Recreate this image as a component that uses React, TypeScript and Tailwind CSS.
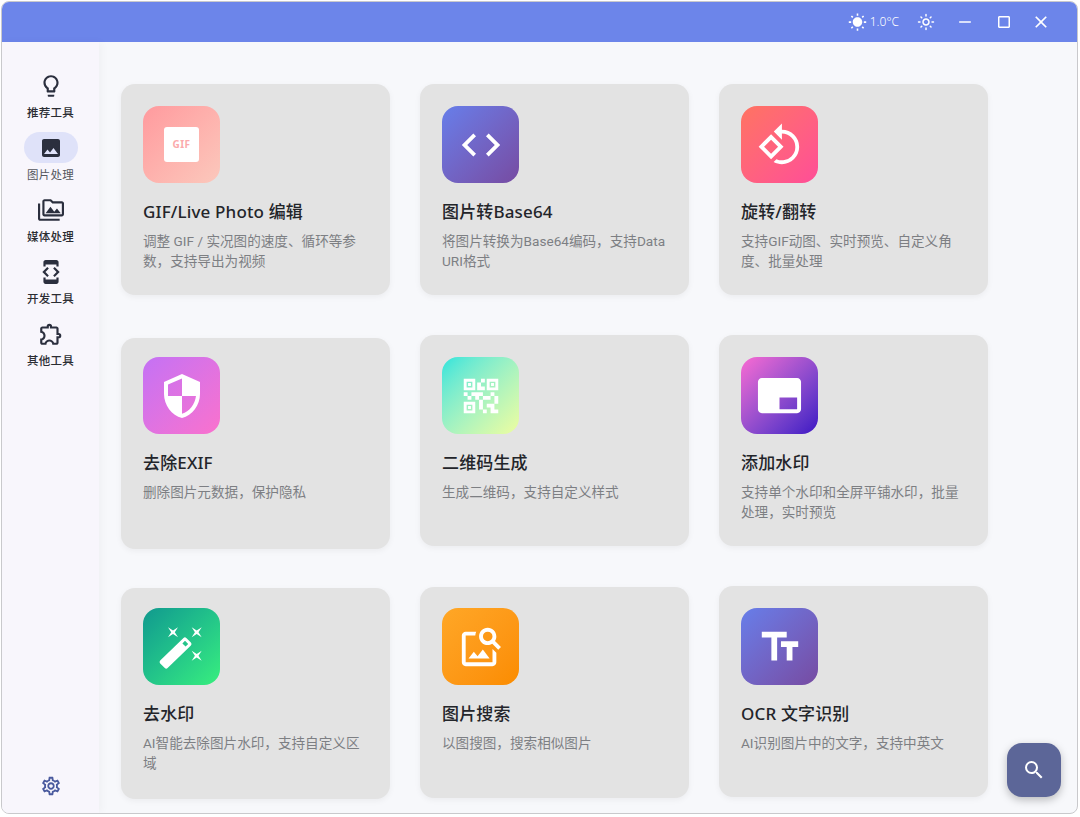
import type { ReactNode } from "react";
import {
  MdBrandingWatermark,
  MdClose,
  MdCode,
  MdCropSquare,
  MdImage,
  MdImageSearch,
  MdOutlineDeveloperMode,
  MdOutlineExtension,
  MdOutlineLightbulb,
  MdOutlineLightMode,
  MdOutlinePermMedia,
  MdOutlineRotate90DegreesCcw,
  MdOutlineSettings,
  MdQrCode2,
  MdRemove,
  MdSearch,
  MdSecurity,
  MdTextFields,
  MdWbSunny,
} from "react-icons/md";

const font = "font-['Noto_Sans','Noto_Sans_CJK_SC',sans-serif]";

type Tool = {
  title: string;
  desc: string;
  bg: string;
  icon: ReactNode;
  mt?: string;
  pt: string;
};

// wand with three little sparkles, drawn on the 77px tile
const WandIcon = () => {
  return (
    <svg viewBox="0 0 77 77" className="w-[77px] h-[77px] text-white" fill="currentColor">
      <path d="M25 19.3l5 3.2 5-3.2-3.2 5 3.2 5-5-3.2-5 3.2 3.2-5z" />
      <path d="M48.7 19.3l5 3.2 5-3.2-3.2 5 3.2 5-5-3.2-5 3.2 3.2-5z" />
      <path d="M48.7 42.7l5 3.2 5-3.2-3.2 5 3.2 5-5-3.2-5 3.2 3.2-5z" />
      <path
        fillRule="evenodd"
        d="M40.5 30a2 2 0 0 1 2.8 0l4.6 4.6a2 2 0 0 1 0 2.8L24.6 60a2 2 0 0 1-2.8 0l-4.6-4.6a2 2 0 0 1 0-2.8zM42 32.8l-2.6 2.6 3.2 3.2 2.6-2.6z"
      />
    </svg>
  );
};

const columns: Tool[][] = [
  [
    {
      title: "GIF/Live Photo 编辑",
      desc: "调整 GIF / 实况图的速度、循环等参\n数，支持导出为视频",
      bg: "bg-gradient-to-br from-[#ff9a9e] to-[#fbc8bc]",
      pt: "pt-[22px]",
      icon: (
        <div className="w-[35px] h-[35px] bg-white rounded-[3px] flex items-center justify-center text-[10px] font-bold tracking-[0.5px] text-[#fbaaac]">
          GIF
        </div>
      ),
    },
    {
      title: "去除EXIF",
      desc: "删除图片元数据，保护隐私",
      bg: "bg-gradient-to-br from-[#c471f5] to-[#fa71cd]",
      icon: <MdSecurity size={48} className="text-white" />,
      mt: "mt-[43px]",
      pt: "pt-[19px]",
    },
    {
      title: "去水印",
      desc: "AI智能去除图片水印，支持自定义区\n域",
      bg: "bg-gradient-to-br from-[#11998e] to-[#38ef7d]",
      icon: <WandIcon />,
      mt: "mt-[39px]",
      pt: "pt-[20px]",
    },
  ],
  [
    {
      title: "图片转Base64",
      desc: "将图片转换为Base64编码，支持Data\nURI格式",
      bg: "bg-gradient-to-br from-[#667eea] to-[#764ba2]",
      icon: <MdCode size={46} className="text-white" />,
      pt: "pt-[22px]",
    },
    {
      title: "二维码生成",
      desc: "生成二维码，支持自定义样式",
      bg: "bg-gradient-to-br from-[#21e4dc] to-[#edfd9f]",
      icon: <MdQrCode2 size={46} className="text-white" />,
      mt: "mt-[40px]",
      pt: "pt-[22px]",
    },
    {
      title: "图片搜索",
      desc: "以图搜图，搜索相似图片",
      bg: "bg-gradient-to-br from-[#ffa726] to-[#fb8c00]",
      icon: <MdImageSearch size={46} className="text-white" />,
      mt: "mt-[41px]",
      pt: "pt-[21px]",
    },
  ],
  [
    {
      title: "旋转/翻转",
      desc: "支持GIF动图、实时预览、自定义角\n度、批量处理",
      bg: "bg-gradient-to-br from-[#ff7361] to-[#ff4d97]",
      icon: <MdOutlineRotate90DegreesCcw size={46} className="text-white" />,
      pt: "pt-[22px]",
    },
    {
      title: "添加水印",
      desc: "支持单个水印和全屏平铺水印，批量\n处理，实时预览",
      bg: "bg-gradient-to-br from-[#fa6ad2] to-[#3f0fc4]",
      icon: <MdBrandingWatermark size={47} className="text-white" />,
      mt: "mt-[40px]",
      pt: "pt-[22px]",
    },
    {
      title: "OCR 文字识别",
      desc: "AI识别图片中的文字，支持中英文",
      bg: "bg-gradient-to-br from-[#667eea] to-[#764ba2]",
      icon: <MdTextFields size={46} className="text-white" />,
      mt: "mt-[40px]",
      pt: "pt-[22px]",
    },
  ],
];

const navItems = [
  { label: "推荐工具", icon: <MdOutlineLightbulb size={26} /> },
  { label: "图片处理", icon: <MdImage size={24} />, active: true },
  { label: "媒体处理", icon: <MdOutlinePermMedia size={26} /> },
  { label: "开发工具", icon: <MdOutlineDeveloperMode size={26} /> },
  { label: "其他工具", icon: <MdOutlineExtension size={26} /> },
];

const ToolCard = ({ tool }: { tool: Tool }) => {
  return (
    <div
      className={`${tool.mt ?? ""} ${tool.pt} w-[269px] h-[211px] rounded-[14px] bg-[#e3e3e3] shadow-[0_2px_6px_rgba(0,0,0,0.05)] px-[22px]`}
    >
      <div
        className={`${tool.bg} w-[77px] h-[77px] rounded-[16px] flex items-center justify-center`}
      >
        {tool.icon}
      </div>
      <p className="mt-[17px] text-[17px] leading-[24px] font-medium tracking-[0.15px] text-[#23252a]">
        {tool.title}
      </p>
      <p className="mt-[8px] font-['Roboto','Noto_Sans_CJK_SC',sans-serif] whitespace-pre text-[13.6px] leading-[19.5px] text-[#7d7f83]">
        {tool.desc}
      </p>
    </div>
  );
};

const App = () => {
  return (
    <div className={`${font} w-[1080px] h-[817px] bg-white pt-[1px] pl-[1px] pr-[2px] pb-[3px]`}>
      <div className="relative w-full h-full flex flex-col overflow-hidden rounded-[8px] border border-[#c9c9cc] bg-[#f7f8fb]">
        <div className="h-[40px] shrink-0 bg-[#6c85ea] flex items-center justify-end text-white">
          <MdWbSunny size={19} />
          <span className="ml-[3px] text-[12px] font-light">1.0°C</span>
          <MdOutlineLightMode size={18} className="ml-[18px]" />
          <MdRemove size={20} className="ml-[20px]" />
          <MdCropSquare size={18} className="ml-[20px]" />
          <MdClose size={20} className="ml-[18px] mr-[26px]" />
        </div>
        <div className="flex flex-1 min-h-0">
          <div className="w-[97px] shrink-0 bg-[#f8f6fc] shadow-[3px_0_8px_rgba(0,0,0,0.03)] flex flex-col items-center pt-[28px] pb-[16px]">
            {navItems.map((item) => (
              <div key={item.label} className="h-[62px] flex flex-col items-center">
                <div
                  className={`w-[54px] h-[31px] rounded-full flex items-center justify-center text-[#2b2f3e] ${
                    item.active ? "bg-[#dfe2f9]" : ""
                  }`}
                >
                  {item.icon}
                </div>
                <span
                  className={`mt-[3px] text-[11.5px] leading-[18px] tracking-[0.3px] ${
                    item.active ? "text-[#55575e]" : "font-medium text-[#2b2d33]"
                  }`}
                >
                  {item.label}
                </span>
              </div>
            ))}
            <MdOutlineSettings size={22} className="mt-auto text-[#4a5a9e]" />
          </div>
          <div className="flex-1 flex gap-[30px] pl-[22px] pt-[42px]">
            {columns.map((col, index) => (
              <div key={index} className="flex flex-col">
                {col.map((tool) => (
                  <ToolCard key={tool.title} tool={tool} />
                ))}
              </div>
            ))}
          </div>
        </div>
        <div className="absolute right-[16px] bottom-[16px] w-[54px] h-[54px] rounded-[15px] bg-[#5c6698] shadow-[0_3px_8px_rgba(0,0,0,0.25)] flex items-center justify-center text-white">
          <MdSearch size={24} />
        </div>
      </div>
    </div>
  );
};

export default App;
